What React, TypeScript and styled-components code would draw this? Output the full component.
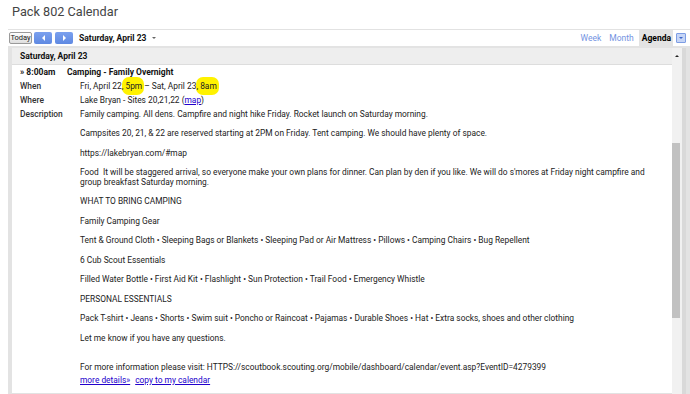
import React from 'react';
import styled, { createGlobalStyle } from 'styled-components';

const Global = createGlobalStyle`
  html, body { margin: 0; padding: 0; background: #fff; }
  body { font-family: Roboto, "Liberation Sans", Arial, sans-serif; color: #222; }
  #root { width: 690px; }
`;

const Page = styled.div`
  width: 690px;
  height: 394px;
  overflow: hidden;
  display: flex;
  flex-direction: column;
`;

const Title = styled.h1`
  margin: 0;
  height: 29px;
  box-sizing: border-box;
  padding: 4px 0 0 12px;
  font: 400 12.7px/16px Roboto, "Liberation Sans", sans-serif;
  color: #444;
`;

const Toolbar = styled.div`
  margin-left: 8px;
  border-top: 1px solid #e2e2e2;
  height: 16px;
  display: flex;
  align-items: flex-start;
  font-size: 8.5px;
`;

const LeftGroup = styled.div`
  display: flex;
  align-items: center;
  padding: 2px 0 0 1px;
  gap: 2px;
`;

const TodayButton = styled.button`
  box-sizing: border-box;
  width: 23px;
  height: 12px;
  padding: 0;
  border: 1px solid #9a9a9a;
  border-radius: 2px;
  background: linear-gradient(#ffffff, #dedede);
  font: 400 7.5px/10px Roboto, "Liberation Sans", sans-serif;
  color: #222;
`;

const NavButton = styled.button<{ $gap?: number }>`
  box-sizing: border-box;
  width: 18px;
  height: 12px;
  padding: 0;
  margin-left: ${(p) => p.$gap ?? 0}px;
  border: none;
  border-radius: 2px;
  background: linear-gradient(#7aa0ee, #5f89e2);
  display: flex;
  align-items: center;
  justify-content: center;
`;

const Tri = styled.span<{ $dir: 'left' | 'right' | 'down' | 'up'; $color: string; $size: number }>`
  width: 0;
  height: 0;
  display: inline-block;
  ${(p) =>
    p.$dir === 'left'
      ? `border-top:${p.$size}px solid transparent;border-bottom:${p.$size}px solid transparent;border-right:${p.$size}px solid ${p.$color};`
      : p.$dir === 'right'
      ? `border-top:${p.$size}px solid transparent;border-bottom:${p.$size}px solid transparent;border-left:${p.$size}px solid ${p.$color};`
      : p.$dir === 'down'
      ? `border-left:${p.$size}px solid transparent;border-right:${p.$size}px solid transparent;border-top:${p.$size}px solid ${p.$color};`
      : `border-left:${p.$size}px solid transparent;border-right:${p.$size}px solid transparent;border-bottom:${p.$size}px solid ${p.$color};`}
`;

const DateLabel = styled.span`
  margin-left: 4px;
  font: 700 8.5px/12px Roboto, "Liberation Sans", sans-serif;
  color: #111;
  display: flex;
  align-items: center;
  gap: 6px;
`;

const RightGroup = styled.div`
  margin-left: auto;
  margin-right: 4px;
  display: flex;
  align-items: flex-start;
  height: 16px;
`;

const ViewLink = styled.span`
  font: 400 8.5px/16px Roboto, "Liberation Sans", sans-serif;
  color: #7393e2;
  margin-right: 8px;
`;

const ActiveTab = styled.span`
  height: 16px;
  padding: 0 2px 0 3px;
  background: #e3e3e3;
  font: 700 8.5px/16px Roboto, "Liberation Sans", sans-serif;
  color: #000;
  margin-left: -3px;
`;

const MenuButton = styled.span`
  box-sizing: border-box;
  width: 10px;
  height: 10px;
  margin: 3px 0 0 3px;
  border: 1px solid #7d9de4;
  border-radius: 1px;
  background: #c6d5f6;
  display: flex;
  align-items: center;
  justify-content: center;
`;

const Panel = styled.div`
  flex: 1;
  min-height: 0;
  margin-left: 8px;
  padding: 2px 4px 0 4px;
  background: #e3e3e3;
  display: flex;
`;

const Content = styled.div`
  flex: 1;
  min-width: 0;
  background: #fff;
  overflow: hidden;
  font-size: 8.4px;
`;

const Scrollbar = styled.div`
  width: 10px;
  background: #f1f1f1;
  border-right: 4px solid #d9d9d9;
  display: flex;
  flex-direction: column;
  align-items: flex-start;
`;

const ScrollArrow = styled.div`
  height: 95px;
  width: 10px;
  display: flex;
  justify-content: center;
  padding-top: 7px;
  box-sizing: border-box;
`;

const Thumb = styled.div`
  width: 8px;
  height: 175px;
  background: #c1c1c1;
`;

const DayHeader = styled.div`
  box-sizing: border-box;
  height: 17px;
  padding-left: 8px;
  background: #eeeeee;
  border-bottom: 1px solid #dddddd;
  font: 700 8.5px/17px Roboto, "Liberation Sans", sans-serif;
  color: #111;
`;

const EventRow = styled.div`
  padding: 1px 6px 5px 8px;
  border-bottom: 1px solid #e2e2e2;
`;

const EventHead = styled.div`
  display: flex;
  height: 14px;
  font: 700 8.5px/13px Roboto, "Liberation Sans", sans-serif;
  color: #111;
`;

const Time = styled.span`
  width: 47px;
  flex: none;
`;

const Details = styled.div`
  display: grid;
  grid-template-columns: 60px 1fr;
  font: 400 8.4px/9.75px Roboto, "Liberation Sans", sans-serif;
`;

const Label = styled.div`
  padding: 2px 0;
  font-weight: 500;
  color: #333;
`;

const Value = styled.div`
  padding: 2px 0;
  color: #222;
`;

const Para = styled.p<{ $after?: number }>`
  margin: 0 0 ${(p) => p.$after ?? 9.75}px;
`;

const Mark = styled.span`
  background: #fff200;
  border-radius: 7px;
  padding: 4px 2px 4px 0;
  margin: 0 -2px 0 0;
`;

const Link = styled.a`
  color: #2200cc;
  text-decoration: underline;
`;

const Links = styled.div`
  margin-top: 3px;
  display: flex;
  gap: 5px;
`;

const essentials1 = [
  'Tent & Ground Cloth',
  'Sleeping Bags or Blankets',
  'Sleeping Pad or Air Mattress',
  'Pillows',
  'Camping Chairs',
  'Bug Repellent',
];
const essentials2 = [
  'Filled Water Bottle',
  'First Aid Kit',
  'Flashlight',
  'Sun Protection',
  'Trail Food',
  'Emergency Whistle',
];
const essentials3 = [
  'Pack T-shirt',
  'Jeans',
  'Shorts',
  'Swim suit',
  'Poncho or Raincoat',
  'Pajamas',
  'Durable Shoes',
  'Hat',
  'Extra socks, shoes and other clothing',
];

export default function App() {
  return (
    <Page>
      <Global />
      <Title>Pack 802 Calendar</Title>
      <Toolbar>
        <LeftGroup>
          <TodayButton>Today</TodayButton>
          <NavButton>
            <Tri $dir="left" $color="#fff" $size={3} />
          </NavButton>
          <NavButton $gap={1}>
            <Tri $dir="right" $color="#fff" $size={3} />
          </NavButton>
          <DateLabel>
            Saturday, April 23
            <Tri $dir="down" $color="#666" $size={2.5} />
          </DateLabel>
        </LeftGroup>
        <RightGroup>
          <ViewLink>Week</ViewLink>
          <ViewLink>Month</ViewLink>
          <ActiveTab>Agenda</ActiveTab>
          <MenuButton>
            <Tri $dir="down" $color="#3a64c8" $size={2.5} />
          </MenuButton>
        </RightGroup>
      </Toolbar>
      <Panel>
        <Content>
          <DayHeader>Saturday, April 23</DayHeader>
          <EventRow>
            <EventHead>
              <Time>» 8:00am</Time>
              <span>Camping - Family Overnight</span>
            </EventHead>
            <Details>
              <Label>When</Label>
              <Value>
                Fri, April 22<Mark>, 5pm</Mark> – Sat, April 23<Mark>, 8am</Mark>
              </Value>
              <Label>Where</Label>
              <Value>
                Lake Bryan - Sites 20,21,22 (<Link href="#">map</Link>)
              </Value>
              <Label>Description</Label>
              <Value>
                <Para>Family camping. All dens. Campfire and night hike Friday. Rocket launch on Saturday morning.</Para>
                <Para>Campsites 20, 21, &amp; 22 are reserved starting at 2PM on Friday. Tent camping. We should have plenty of space.</Para>
                <Para>https://lakebryan.com/#map</Para>
                <Para>
                  Food&nbsp; It will be staggered arrival, so everyone make your own plans for dinner. Can plan by den if you like. We will do s'mores at Friday night campfire and group breakfast Saturday morning.
                </Para>
                <Para>WHAT TO BRING CAMPING</Para>
                <Para>Family Camping Gear</Para>
                <Para>{essentials1.join(' • ')}</Para>
                <Para>6 Cub Scout Essentials</Para>
                <Para>{essentials2.join(' • ')}</Para>
                <Para>PERSONAL ESSENTIALS</Para>
                <Para>{essentials3.join(' • ')}</Para>
                <Para $after={19.5}>Let me know if you have any questions.</Para>
                <Para $after={0}>
                  For more information please visit: HTTPS://scoutbook.scouting.org/mobile/dashboard/calendar/event.asp?EventID=4279399
                </Para>
                <Links>
                  <Link href="#">more details»</Link>
                  <Link href="#">copy to my calendar</Link>
                </Links>
              </Value>
            </Details>
          </EventRow>
          <EventRow>
            <EventHead>
              <Time>9:00am</Time>
              <span>Rocket Launch for Pack 802</span>
            </EventHead>
          </EventRow>
        </Content>
        <Scrollbar>
          <ScrollArrow>
            <Tri $dir="up" $color="#222" $size={2} />
          </ScrollArrow>
          <Thumb />
        </Scrollbar>
      </Panel>
    </Page>
  );
}
